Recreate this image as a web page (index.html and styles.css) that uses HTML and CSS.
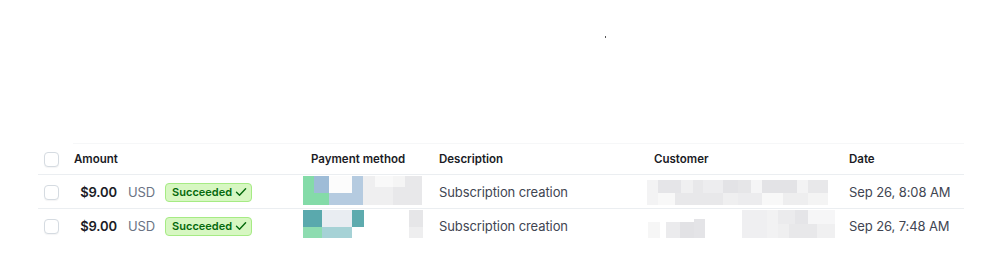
FILE: index.html
```html
<!DOCTYPE html>
<html>
<head>
<meta charset="utf-8">
<link rel="stylesheet" href="styles.css">
</head>
<body>
<div class="page">
  <div class="speck"></div>
  <div class="table">
    <div class="topline"></div>
    <div class="row head">
      <div class="cell chk"><span class="box"></span></div>
      <div class="cell">Amount</div>
      <div class="cell">Payment method</div>
      <div class="cell">Description</div>
      <div class="cell">Customer</div>
      <div class="cell">Date</div>
    </div>
    <div class="row">
      <div class="cell chk"><span class="box"></span></div>
      <div class="cell amountcell">
        <span class="amt">$9.00</span><span class="cur">USD</span>
        <span class="badge">Succeeded<svg width="12" height="12" viewBox="0 0 12 12"><path d="M1.5 6.3 L4.5 9.3 L10.6 2.8" fill="none" stroke="#05690d" stroke-width="1.4" stroke-linecap="round" stroke-linejoin="round"/></svg></span>
      </div>
      <div class="cell pm">
        <svg width="120" height="30" viewBox="0 0 120 30">
          <rect x="0" y="0" width="26" height="29" fill="#84dba8"/>
          <rect x="11" y="0" width="15" height="17" fill="#9ebcd7"/>
          <rect x="26" y="0" width="34" height="29" fill="#b5cbe0"/>
          <rect x="26" y="0" width="23" height="17" fill="#fcfcfc"/>
          <rect x="60" y="0" width="59" height="29" fill="#efeff0"/>
          <rect x="72" y="0" width="18" height="11" fill="#f9f9f9"/>
          <rect x="90" y="0" width="12" height="11" fill="#f5f5f5"/>
          <rect x="90" y="11" width="29" height="18" fill="#e8e8ea"/>
          <rect x="102" y="0" width="17" height="11" fill="#e8e8ea"/>
        </svg>
      </div>
      <div class="cell txt">Subscription creation</div>
      <div class="cell cust">
        <svg width="190" height="34" viewBox="646 175 190 34">
          <rect x="647" y="180" width="11" height="13" fill="#f3f3f4"/>
          <rect x="658" y="180" width="23" height="13" fill="#e5e5e8"/>
          <rect x="681" y="180" width="12" height="13" fill="#f0f0f1"/>
          <rect x="693" y="180" width="10" height="13" fill="#e8e8ea"/>
          <rect x="703" y="180" width="20" height="13" fill="#ededef"/>
          <rect x="723" y="180" width="15" height="13" fill="#e3e3e6"/>
          <rect x="738" y="180" width="13" height="13" fill="#e6e6e8"/>
          <rect x="751" y="180" width="11" height="13" fill="#f5f5f6"/>
          <rect x="762" y="180" width="35" height="13" fill="#e3e3e6"/>
          <rect x="797" y="180" width="11" height="13" fill="#f3f3f4"/>
          <rect x="808" y="180" width="20" height="13" fill="#e8e8ea"/>
          <rect x="647" y="193" width="11" height="12" fill="#f3f3f4"/>
          <rect x="658" y="193" width="17" height="12" fill="#f8f8f8"/>
          <rect x="675" y="193" width="48" height="12" fill="#e8e8ea"/>
          <rect x="723" y="193" width="15" height="12" fill="#efeff0"/>
          <rect x="738" y="193" width="24" height="12" fill="#ececee"/>
          <rect x="762" y="193" width="21" height="12" fill="#f8f8f8"/>
          <rect x="783" y="193" width="25" height="12" fill="#eeeeef"/>
          <rect x="808" y="193" width="20" height="12" fill="#f4f4f4"/>
        </svg>
      </div>
      <div class="cell txt">Sep 26, 8:08 AM</div>
    </div>
    <div class="row last">
      <div class="cell chk"><span class="box"></span></div>
      <div class="cell amountcell">
        <span class="amt">$9.00</span><span class="cur">USD</span>
        <span class="badge">Succeeded<svg width="12" height="12" viewBox="0 0 12 12"><path d="M1.5 6.3 L4.5 9.3 L10.6 2.8" fill="none" stroke="#05690d" stroke-width="1.4" stroke-linecap="round" stroke-linejoin="round"/></svg></span>
      </div>
      <div class="cell pm">
        <svg width="120" height="30" viewBox="0 0 120 30">
          <rect x="0" y="0" width="19" height="17" fill="#5aa9ad"/>
          <rect x="19" y="0" width="30" height="17" fill="#e9edf2"/>
          <rect x="49" y="0" width="12" height="17" fill="#5eabae"/>
          <rect x="0" y="17" width="19" height="11" fill="#8ddcb0"/>
          <rect x="19" y="17" width="30" height="11" fill="#a6d2d6"/>
          <rect x="106" y="0" width="14" height="17" fill="#e6e6e8"/>
          <rect x="106" y="17" width="14" height="11" fill="#eeeeef"/>
        </svg>
      </div>
      <div class="cell txt">Subscription creation</div>
      <div class="cell cust">
        <svg width="190" height="34" viewBox="646 209 190 34">
          <rect x="648" y="222" width="12" height="16" fill="#f6f6f6"/>
          <rect x="666" y="222" width="14" height="16" fill="#ebebed"/>
          <rect x="680" y="222" width="14" height="16" fill="#e2e2e5"/>
          <rect x="694" y="219" width="11" height="19" fill="#e4e4e7"/>
          <rect x="742" y="210" width="25" height="28" fill="#efeff1"/>
          <rect x="767" y="210" width="11" height="28" fill="#f2f2f3"/>
          <rect x="778" y="210" width="17" height="14" fill="#ebebed"/>
          <rect x="778" y="224" width="11" height="14" fill="#efeff0"/>
          <rect x="795" y="210" width="13" height="14" fill="#e5e5e8"/>
          <rect x="789" y="224" width="28" height="14" fill="#e8e8ea"/>
          <rect x="808" y="210" width="27" height="14" fill="#f6f6f7"/>
          <rect x="817" y="224" width="18" height="14" fill="#f0f0f1"/>
        </svg>
      </div>
      <div class="cell txt">Sep 26, 7:48 AM</div>
    </div>
  </div>
</div>
</body>
</html>
```
FILE: styles.css
```css
* { box-sizing: border-box; }
html, body { margin: 0; padding: 0; background: #ffffff; }
body {
  font-family: "Inter", "Liberation Sans", sans-serif;
  color: #414552;
  width: 1000px;
  height: 278px;
  overflow: hidden;
}
.page {
  position: relative;
  padding-top: 143px;
  padding-left: 38px;
}
.speck {
  position: absolute;
  left: 605px;
  top: 36px;
  width: 1px;
  height: 2px;
  background: #555;
}
.table {
  width: 926px;
}
.topline {
  height: 1px;
  margin-left: 35px;
  background: #f6f7f8;
}
.row {
  display: grid;
  grid-template-columns: 28px 237px 128px 215px 195px 123px;
  height: 34px;
  border-bottom: 1px solid #ebeef1;
  align-items: center;
}
.row.head {
  height: 31px;
}
.row.last { border-bottom: none; }
.cell {
  padding-left: 8px;
  font-size: 13px;
  letter-spacing: -0.1px;
  white-space: nowrap;
  display: flex;
  align-items: center;
  height: 100%;
}
.head .cell {
  font-size: 11.5px;
  letter-spacing: 0;
  font-weight: 600;
  color: #1a1b25;
}
.cell.chk { padding-left: 6px; }
.box {
  width: 15px;
  height: 15px;
  border: 1px solid #d5dbe1;
  border-radius: 4px;
  background: #fff;
  box-shadow: 0 1px 1px rgba(64, 68, 82, 0.06);
}
.amt {
  display: inline-block;
  width: 43px;
  text-align: right;
  font-weight: 600;
  color: #1a1b25;
}
.cur {
  margin-left: 11px;
  color: #6a7383;
}
.badge {
  margin-left: 10px;
  display: inline-flex;
  align-items: center;
  gap: 3px;
  height: 19px;
  padding: 0 4px 0 6px;
  border: 1px solid #a6eb84;
  border-radius: 4px;
  background: #d7f7c2;
  color: #05690d;
  font-size: 11px;
  font-weight: 600;
  letter-spacing: 0;
}
.cell.pm { padding-left: 0; padding-top: 1px; align-items: flex-start; }
.row .cell.pm svg { display: block; }
.cell.cust { padding-left: 0; }
.cell.cust svg { display: block; }
.txt { color: #414552; }
```
